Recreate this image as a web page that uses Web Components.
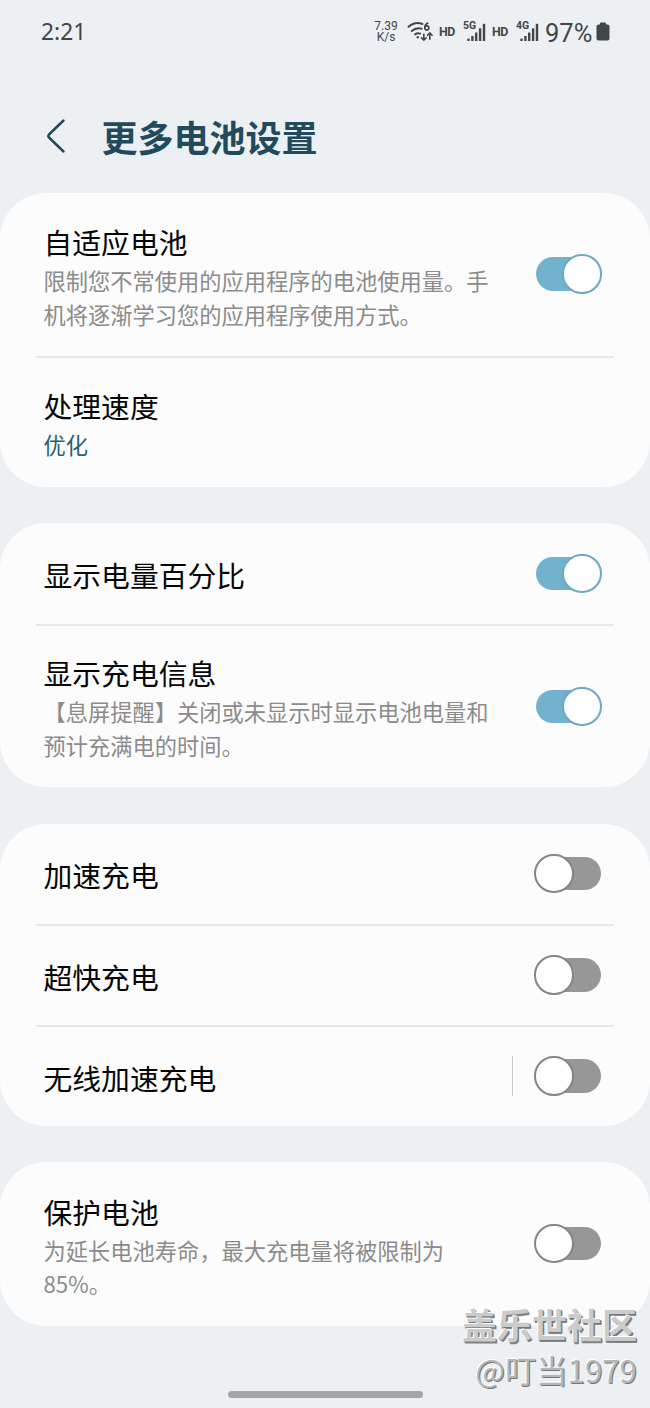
<!DOCTYPE html>
<html lang="zh-CN">
<head>
<meta charset="utf-8">
<meta name="viewport" content="width=device-width, initial-scale=1">
<title>更多电池设置</title>
<style>
	html {
		background: #ecf0f3;
	}

	body {
		margin: 0;
		height: 1408px;
		overflow: hidden;
		font-family: "Noto Sans CJK SC", sans-serif;
		color: #050505;
	}
</style>
</head>
<body>
<settings-screen heading="更多电池设置">
	<status-bar slot="status" time="2:21" speed="7.39" battery="97%"></status-bar>

	<settings-card>
		<settings-row label="自适应电池" style="--height: 163px; --shift: 3.5px">
			限制您不常使用的应用程序的电池使用量。手机将逐渐学习您的应用程序使用方式。
			<toggle-switch slot="control" on></toggle-switch>
		</settings-row>
		<settings-row label="处理速度" accent style="--height: 129px; --shift: 2px">优化</settings-row>
	</settings-card>

	<settings-card>
		<settings-row label="显示电量百分比" style="--height: 101px">
			<toggle-switch slot="control" on></toggle-switch>
		</settings-row>
		<settings-row label="显示充电信息" style="--height: 161px; --shift: .5px">
			【息屏提醒】关闭或未显示时显示电池电量和预计充满电的时间。
			<toggle-switch slot="control" on></toggle-switch>
		</settings-row>
	</settings-card>

	<settings-card>
		<settings-row label="加速充电" style="--height: 100px">
			<toggle-switch slot="control"></toggle-switch>
		</settings-row>
		<settings-row label="超快充电" style="--height: 99px">
			<toggle-switch slot="control"></toggle-switch>
		</settings-row>
		<settings-row label="无线加速充电" split style="--height: 99px">
			<toggle-switch slot="control"></toggle-switch>
		</settings-row>
	</settings-card>

	<settings-card>
		<settings-row label="保护电池" style="--height: 164px; --shift: 3.5px">
			为延长电池寿命，最大充电量将被限制为 85%。
			<toggle-switch slot="control"></toggle-switch>
		</settings-row>
	</settings-card>

	<photo-credit slot="overlay" site="盖乐世社区">@叮当1979</photo-credit>
</settings-screen>

<script>
function define (name, html, setup) {
	const template = document.createElement("template");
	template.innerHTML = html;

	customElements.define(name, class extends HTMLElement {
		constructor () {
			super();

			const shadow = this.attachShadow({mode: "open"});
			shadow.appendChild(template.content.cloneNode(true));
		}

		connectedCallback () {
			setup && setup(this, this.shadowRoot);
		}
	});
}

// Copies attributes of the host into the elements with the same id
function fill (...names) {
	return (host, root) => {
		for (const name of names) {
			root.getElementById(name).textContent = host.getAttribute(name);
		}
	};
}

define("signal-bars", `
	<style>
		:host {
			display: block;
			position: relative;
			width: 24px;
			height: 22px;
		}

		span {
			position: absolute;
			left: 1px;
			top: -1px;
			font: 700 10.5px/11px Roboto, sans-serif;
		}

		svg {
			display: block;
		}
	</style>
	<span><slot></slot></span>
	<svg width="24" height="22" fill="currentColor">
		<rect x="5.3" y="17.6" width="2.4" height="2.4"/>
		<rect x="9.2" y="15" width="2.4" height="5"/>
		<rect x="13" y="11.5" width="2.4" height="8.5"/>
		<rect x="16.9" y="7.3" width="2.4" height="12.7"/>
		<rect x="20.8" y="2.8" width="2.4" height="17.2"/>
	</svg>
`);

define("status-bar", `
	<style>
		:host {
			display: flex;
			align-items: center;
			box-sizing: border-box;
			height: 64px;
			padding: 0 40px 0 41px;
			color: #40474a;
			font-family: Roboto, sans-serif;
		}

		#time {
			margin-right: auto;
			font: 22.8px/30px "Noto Sans", sans-serif;
		}

		.speed {
			width: 26px;
			font-size: 12px;
			line-height: 11px;
			text-align: center;
		}

		.wifi {
			margin: 0 4px 0 8px;
		}

		.hd {
			width: 18px;
			margin: -1px 6px 0 0;
			font-size: 12.4px;
			line-height: 14px;
			font-weight: 700;
			letter-spacing: -.4px;
			text-align: center;
		}

		signal-bars {
			margin-right: 5px;
		}

		#battery {
			width: 48px;
			margin: 1px 3px 0 1px;
			font-size: 25.5px;
			line-height: 30px;
		}
	</style>
	<span id="time"></span>
	<div class="speed"><div id="speed"></div>K/s</div>
	<svg class="wifi" width="27" height="24" viewBox="0 0 27 24" fill="none" stroke="currentColor" stroke-width="1.9" stroke-linecap="round">
		<path d="M1.5 6.8Q8 1 15.5 4M4.8 11Q9.3 7 14.6 8.7M8 14.4Q10.5 12.4 13.2 13.7"/>
		<circle cx="10.8" cy="17.2" r="1.2" fill="currentColor" stroke="none"/>
		<path d="M20.8 3Q18 4.2 17.8 7.6" stroke-width="1.6"/>
		<circle cx="19.8" cy="7.9" r="2" stroke-width="1.6"/>
		<path d="M16.8 14.2V20M14.5 17.9L16.8 20.2L19.1 17.9M22.8 19.2V13.2M20.5 15.3L22.8 13L25.1 15.3" stroke-width="1.6"/>
	</svg>
	<span class="hd">HD</span>
	<signal-bars>5G</signal-bars>
	<span class="hd">HD</span>
	<signal-bars>4G</signal-bars>
	<span id="battery"></span>
	<svg width="14" height="20" fill="currentColor">
		<path d="M4 1.5Q4 .5 5 .5H9Q10 .5 10 1.5V2.5H11.5Q13.5 2.5 13.5 4.5V16.5Q13.5 18.5 11.5 18.5H2.5Q.5 18.5 .5 16.5V4.5Q.5 2.5 2.5 2.5H4Z"/>
	</svg>
`, fill("time", "speed", "battery"));

define("toggle-switch", `
	<style>
		:host {
			display: flex;
			position: relative;
			width: 67.5px;
			height: 39.5px;
			--edge: #858585;
			--track: #979797;
		}

		:host([on]) {
			justify-content: flex-end;
			--edge: #6caac3;
			--track: #72b2cf;
		}

		.track {
			position: absolute;
			left: 2px;
			top: 3px;
			width: 65px;
			height: 33.5px;
			border-radius: 17px;
			background: var(--track);
		}

		.thumb {
			position: relative;
			box-sizing: border-box;
			width: 39.5px;
			height: 39.5px;
			border: 2px solid var(--edge);
			border-radius: 50%;
			background: #fefefe;
		}
	</style>
	<div class="track"></div>
	<div class="thumb"></div>
`);

define("settings-row", `
	<style>
		:host {
			display: flex;
			align-items: center;
			box-sizing: border-box;
			height: var(--height);
			padding: 0 48.5px 0 43.5px;
		}

		.text {
			width: 447px;
			padding-top: var(--shift, 4px);
		}

		#label {
			margin-bottom: 1px;
			font-size: 28.8px;
			line-height: 42px;
			white-space: nowrap;
		}

		.note {
			font-size: 22.25px;
			line-height: 33.5px;
			color: #8b8b8b;
		}

		:host([accent]) .note {
			color: #28616f;
		}

		.control {
			display: flex;
			align-items: center;
			gap: 21px;
			margin: 0 0 1px auto;
		}

		:host([split]) .control::before {
			content: "";
			width: 1.5px;
			height: 40px;
			background: #c9c9c9;
		}
	</style>
	<div class="text">
		<div id="label"></div>
		<div class="note"><slot></slot></div>
	</div>
	<div class="control"><slot name="control"></slot></div>
`, fill("label"));

define("settings-card", `
	<style>
		:host {
			display: block;
			border-radius: 46px;
			background: #fcfcfc;
		}

		::slotted(settings-row:not(:first-child)) {
			border-top: 2px solid transparent;
			box-sizing: content-box !important;
			background: linear-gradient(#e7e8e9, #e7e8e9) 36px 0 / 578px 2px no-repeat border-box;
		}
	</style>
	<slot></slot>
`);

define("photo-credit", `
	<style>
		:host {
			display: block;
			position: absolute;
			right: 13px;
			top: 1298px;
			text-align: right;
			white-space: nowrap;
			color: #cbcbcb;
			text-shadow: -1px -1px 0 #fff, 1px 1px 0 #777, 1.5px 1.5px 0 #888;
		}

		#site {
			font-size: 35px;
			line-height: 52px;
			font-weight: 700;
		}

		.author {
			font-size: 31.3px;
			line-height: 40px;
			color: #b4b6b8;
			text-shadow: -1px -1px 0 #fff, 1px 1px 0 #777;
		}
	</style>
	<div id="site"></div>
	<div class="author"><slot></slot></div>
`, fill("site"));

define("settings-screen", `
	<style>
		:host {
			display: flex;
			flex-direction: column;
			position: relative;
			box-sizing: border-box;
			width: 650px;
			height: 1408px;
			padding-bottom: 10px;
			overflow: hidden;
			background: #ecf0f3;
		}

		header {
			display: flex;
			align-items: center;
			gap: 35.5px;
			box-sizing: border-box;
			height: 129px;
			padding: 13px 45px 0;
			color: #214b5c;
		}

		header svg {
			margin-top: 1px;
		}

		h1 {
			margin: 2px 0 0;
			font-size: 36px;
			line-height: 50px;
			font-weight: 700;
		}

		main {
			display: flex;
			flex-direction: column;
			gap: 36.4px;
		}

		.handle {
			width: 195px;
			height: 7px;
			margin: auto auto 0;
			border-radius: 4px;
			background: #a1a5a8;
		}
	</style>
	<slot name="status"></slot>
	<header>
		<svg width="21" height="36" fill="none" stroke="currentColor" stroke-width="2.5" stroke-linecap="round" stroke-linejoin="round">
			<path d="M18.5 2.5L4 16.5Q2.7 18 4 19.5L18.5 33.5"/>
		</svg>
		<h1 id="heading"></h1>
	</header>
	<main><slot></slot></main>
	<div class="handle"></div>
	<slot name="overlay"></slot>
`, fill("heading"));
</script>
</body>
</html>
